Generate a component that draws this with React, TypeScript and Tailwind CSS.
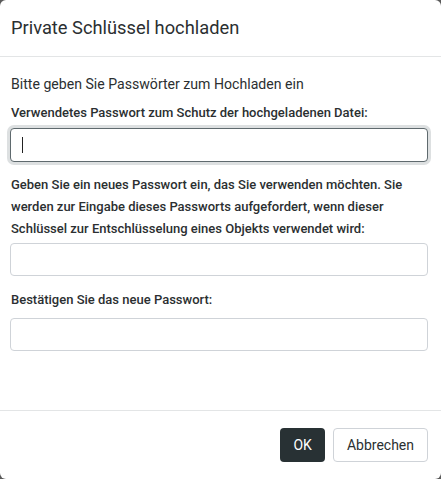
import React from "react";

const font = { fontFamily: "Roboto, 'Noto Sans', sans-serif" };

function Field({ focused }: { focused?: boolean }) {
  return (
    <input
      type="password"
      className={
        focused
          ? "block w-full h-[34px] rounded-[4px] border border-[#5f6a6e] bg-white px-3 outline-none ring-[3px] ring-[#dde0e1]"
          : "block w-full h-[33px] rounded-[4px] border border-[#cfd3d8] bg-white px-3 outline-none"
      }
    />
  );
}

export default function App() {
  return (
    <div className="w-[441px] h-[479px] bg-[#5a5a5a] overflow-hidden" style={font}>
      <div className="flex flex-col w-[441px] h-[479px] bg-white rounded-[6px] text-[#2b2f31]">
        {/* Header */}
        <div className="h-[57px] flex items-center px-[11px] border-b border-[#e3e5e6]">
          <h2 className="text-[18.3px] font-normal">Private Schlüssel hochladen</h2>
        </div>

        {/* Body */}
        <div className="flex-1 px-[10px] pt-[17px]">
          <p className="text-[14.1px] leading-[20px] pl-[1px]">Bitte geben Sie Passwörter zum Hochladen ein</p>
          <label className="block mt-[9px] text-[13px] font-medium leading-[20px] pl-[1px]">
            Verwendetes Passwort zum Schutz der hochgeladenen Datei:
          </label>
          <div className="mt-[5px] pr-[3px] relative">
            <Field focused />
            <span className="absolute left-[12px] top-[9px] w-px h-[16px] bg-[#222]" />
          </div>
          <label className="block mt-[12px] text-[13px] font-medium leading-[22px] pl-[1px] pr-[20px]">
            Geben Sie ein neues Passwort ein, das Sie verwenden möchten. Sie werden zur Eingabe dieses Passworts aufgefordert, wenn dieser Schlüssel zur Entschlüsselung eines Objekts verwendet wird:
          </label>
          <div className="mt-[3px] pr-[3px]">
            <Field />
          </div>
          <label className="block mt-[14px] text-[13px] font-medium leading-[20px] pl-[1px]">
            Bestätigen Sie das neue Passwort:
          </label>
          <div className="mt-[8px] pr-[3px]">
            <Field />
          </div>
        </div>

        {/* Footer */}
        <div className="h-[69px] flex items-center justify-end gap-[8px] px-[13px] border-t border-[#e3e5e6]">
          <button className="h-[34px] px-[13px] rounded-[4px] bg-[#283134] text-white text-[14px]">OK</button>
          <button className="h-[34px] px-[13px] rounded-[4px] border border-[#cfd3d8] bg-white text-[#2b2f31] text-[14px]">
            Abbrechen
          </button>
        </div>
      </div>
    </div>
  );
}
